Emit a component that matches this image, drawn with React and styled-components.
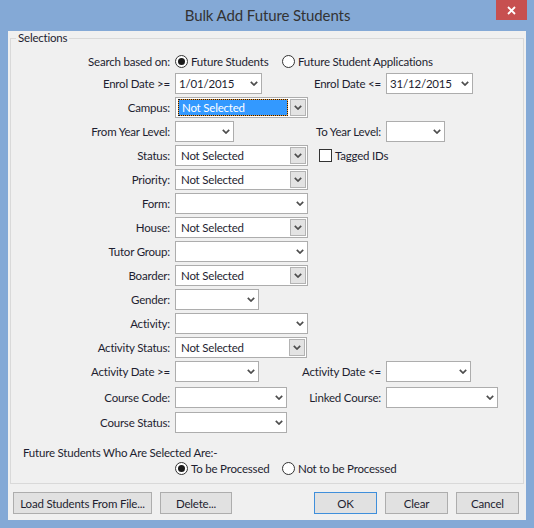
import React from "react";
import styled, { createGlobalStyle } from "styled-components";

const GlobalStyle = createGlobalStyle`
  html, body { margin: 0; padding: 0; background: #84a9d6; }
  body {
    font-family: Lato, "Liberation Sans", sans-serif;
    font-size: 11.5px;
    letter-spacing: -0.2px;
    color: #1e1e30;
  }
`;

const Window = styled.div`
  width: 534px;
  height: 528px;
  box-sizing: border-box;
  background: #84a9d6;
  display: flex;
  flex-direction: column;
  padding: 0 8px 8px;
`;

const TitleBar = styled.div`
  height: 31px;
  flex: 0 0 31px;
  display: grid;
  grid-template-columns: 1fr auto 1fr;
  margin-right: -1px;
`;

const Title = styled.div`
  grid-column: 2;
  line-height: 30px;
  font-size: 15px;
  letter-spacing: -0.1px;
  color: #333;
  white-space: nowrap;
`;

const CloseButton = styled.div`
  grid-column: 3;
  justify-self: end;
  width: 31px;
  height: 20px;
  background: #c75050;
  display: flex;
  align-items: center;
  justify-content: center;
`;

const Panel = styled.div`
  flex: 1;
  background: #f0f0f0;
  display: flex;
  flex-direction: column;
`;

const GroupBox = styled.div`
  position: relative;
  margin: 7px 2px 0;
  height: 446px;
  box-sizing: border-box;
  border: 1px solid #d9d9d9;
  padding-top: 12px;
  display: flex;
  flex-direction: column;
`;

const Legend = styled.span`
  position: absolute;
  top: -8px;
  left: 5px;
  padding: 0 2px;
  line-height: 14px;
  background: #f0f0f0;
`;

const Row = styled.div`
  display: grid;
  grid-template-columns: 159px 115px 86px auto;
  column-gap: 5px;
  align-items: center;
  height: ${(p) => p.$h || 24}px;
`;

const Label = styled.div`
  text-align: right;
  white-space: nowrap;
`;

const Cell = styled.div`
  grid-column: ${(p) => (p.$span ? `span ${p.$span}` : "auto")};
  display: flex;
  align-items: center;
  gap: ${(p) => p.$gap || 0}px;
`;

const ComboBox = styled.div`
  width: ${(p) => p.$w}px;
  height: 21px;
  box-sizing: border-box;
  border: 1px solid #adadad;
  background: #fff;
  display: flex;
  align-items: center;
  padding: 0 3px 0 3px;
  white-space: nowrap;
`;

const ComboText = styled.span`
  flex: 1;
  overflow: hidden;
`;

const ListBox = styled.div`
  width: ${(p) => p.$w}px;
  height: 21px;
  box-sizing: border-box;
  border: 1px solid #adadad;
  background: #fff;
  display: flex;
  align-items: stretch;
  padding: 1px;
  white-space: nowrap;
`;

const ListText = styled.span`
  flex: 1;
  display: flex;
  align-items: center;
  padding-left: 4px;
  margin-right: 2px;
`;

const Highlight = styled.span`
  flex: 1;
  display: flex;
  align-items: center;
  margin: 0 2px 0 1px;
  padding-left: 3px;
  color: #fff;
  border: 1px dotted #1a1a1a;
  background: linear-gradient(#3399ff, #3399ff) padding-box, #f29d38 border-box;
`;

const DropButton = styled.span`
  width: 16px;
  box-sizing: border-box;
  border: 1px solid #b3b3b3;
  background: #e3e3e3;
  display: flex;
  align-items: center;
  justify-content: center;
`;

const RadioGroup = styled.div`
  display: flex;
  align-items: center;
`;

const Option = styled.label`
  display: flex;
  align-items: center;
  gap: 3px;
  width: ${(p) => (p.$w ? `${p.$w}px` : "auto")};
  white-space: nowrap;
`;

const RadioDot = styled.span`
  width: 13px;
  height: 13px;
  box-sizing: border-box;
  border-radius: 50%;
  border: 1px solid #333;
  background: #fff;
  display: flex;
  align-items: center;
  justify-content: center;
  &::after {
    content: "";
    width: 7px;
    height: 7px;
    border-radius: 50%;
    background: ${(p) => (p.$on ? "#1a1a1a" : "transparent")};
  }
`;

const CheckBox = styled.span`
  width: 13px;
  height: 13px;
  box-sizing: border-box;
  border: 1px solid #333;
  background: #fff;
`;

const Note = styled.div`
  margin-top: 10px;
  padding-left: 12px;
  line-height: 15px;
`;

const ButtonBar = styled.div`
  margin-top: 8px;
  display: flex;
  gap: 8px;
  padding: 0 7px 0 5px;
`;

const Spacer = styled.div`
  flex: 1;
`;

const Button = styled.div`
  width: ${(p) => p.$w}px;
  height: 22px;
  box-sizing: border-box;
  border: 1px solid ${(p) => (p.$default ? "#3f8fdb" : "#adadad")};
  background: #e1e1e1;
  display: flex;
  align-items: center;
  justify-content: center;
  white-space: nowrap;
`;

const Chevron = () => (
  <svg width="8" height="5" viewBox="0 0 8 5">
    <path d="M0.8 0.8 L4 4 L7.2 0.8" fill="none" stroke="#4d4d4d" strokeWidth="1.7" />
  </svg>
);

const Combo = ({ w, value }) => (
  <ComboBox $w={w}>
    <ComboText>{value}</ComboText>
    <Chevron />
  </ComboBox>
);

const ListCombo = ({ w, value = "Not Selected", focused }) => (
  <ListBox $w={w}>
    {focused ? <Highlight>{value}</Highlight> : <ListText>{value}</ListText>}
    <DropButton>
      <Chevron />
    </DropButton>
  </ListBox>
);

const Radio = ({ label, on, w }) => (
  <Option $w={w}>
    <RadioDot $on={on} />
    {label}
  </Option>
);

const Field = ({ label, h, span = 1, children }) => (
  <Row $h={h}>
    <Label>{label}</Label>
    <Cell $span={span}>{children}</Cell>
  </Row>
);

const PairRow = ({ label, left, rightLabel, right, h }) => (
  <Row $h={h}>
    <Label>{label}</Label>
    <Cell>{left}</Cell>
    <Label>{rightLabel}</Label>
    <Cell>{right}</Cell>
  </Row>
);

export default function App() {
  return (
    <>
      <GlobalStyle />
      <Window>
        <TitleBar>
          <Title>Bulk Add Future Students</Title>
          <CloseButton>
            <svg width="9" height="9" viewBox="0 0 9 9">
              <path d="M1 1 L8 8 M8 1 L1 8" stroke="#fff" strokeWidth="1.8" />
            </svg>
          </CloseButton>
        </TitleBar>
        <Panel>
          <GroupBox>
            <Legend>Selections</Legend>
            <Field label="Search based on:" h={20} span={3}>
              <RadioGroup>
                <Radio label="Future Students" on w={107} />
                <Radio label="Future Student Applications" />
              </RadioGroup>
            </Field>
            <PairRow
              label="Enrol Date >="
              left={<Combo w={87} value="1/01/2015" />}
              rightLabel="Enrol Date <="
              right={<Combo w={87} value="31/12/2015" />}
            />
            <Field label="Campus:" span={3}>
              <ListCombo w={133} focused />
            </Field>
            <PairRow
              label="From Year Level:"
              left={<Combo w={59} />}
              rightLabel="To Year Level:"
              right={<Combo w={59} />}
            />
            <Field label="Status:" span={3}>
              <Cell $gap={11}>
                <ListCombo w={133} />
                <Option>
                  <CheckBox />
                  Tagged IDs
                </Option>
              </Cell>
            </Field>
            <Field label="Priority:" span={3}>
              <ListCombo w={133} />
            </Field>
            <Field label="Form:" span={3}>
              <Combo w={133} />
            </Field>
            <Field label="House:" span={3}>
              <ListCombo w={133} />
            </Field>
            <Field label="Tutor Group:" span={3}>
              <Combo w={133} />
            </Field>
            <Field label="Boarder:" span={3}>
              <ListCombo w={133} />
            </Field>
            <Field label="Gender:" span={3}>
              <Combo w={84} />
            </Field>
            <Field label="Activity:" span={3}>
              <Combo w={133} />
            </Field>
            <Field label="Activity Status:" span={3}>
              <ListCombo w={132} />
            </Field>
            <PairRow
              h={25}
              label="Activity Date >="
              left={<Combo w={84} />}
              rightLabel="Activity Date <="
              right={<Combo w={85} />}
            />
            <PairRow
              h={26}
              label="Course Code:"
              left={<Combo w={112} />}
              rightLabel="Linked Course:"
              right={<Combo w={112} />}
            />
            <Field label="Course Status:" h={25} span={3}>
              <Combo w={112} />
            </Field>
            <Note>Future Students Who Are Selected Are:-</Note>
            <Field label="" h={16} span={3}>
              <RadioGroup>
                <Radio label="To be Processed" on w={107} />
                <Radio label="Not to be Processed" />
              </RadioGroup>
            </Field>
          </GroupBox>
          <ButtonBar>
            <Button $w={139}>Load Students From File...</Button>
            <Button $w={72}>Delete...</Button>
            <Spacer />
            <Button $w={63} $default>OK</Button>
            <Button $w={63}>Clear</Button>
            <Button $w={63}>Cancel</Button>
          </ButtonBar>
        </Panel>
      </Window>
    </>
  );
}
